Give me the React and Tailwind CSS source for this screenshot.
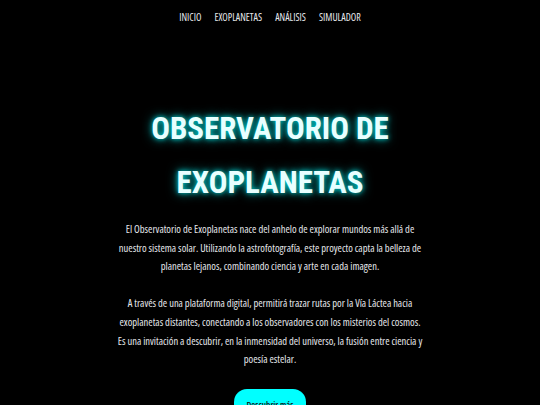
import React from 'react';

const navItems = ['INICIO', 'EXOPLANETAS', 'ANÁLISIS', 'SIMULADOR'];

const App = () => {
  return (
    <div className="min-h-screen bg-black text-white font-['Open_Sans',sans-serif] [font-stretch:condensed]">
      {/* Top navigation */}
      <nav className="flex justify-center gap-[13px] pt-[11px] text-[10px] text-gray-200">
        {navItems.map((item) => (
          <a key={item} href="#" className="leading-[12px]">
            {item}
          </a>
        ))}
      </nav>

      {/* Hero */}
      <section className="flex flex-col items-center text-center pt-[79px]">
        <h1 className="font-['Roboto_Condensed',sans-serif] text-[31px] font-bold leading-[54px] text-[#e8ffff] [text-shadow:0_0_5px_#00d0d0,0_0_11px_#009c9c]">
          OBSERVATORIO DE
          <br />
          EXOPLANETAS
        </h1>

        <div className="mt-[10px] w-[306px] text-[10.5px] leading-[18.6px] text-gray-200">
          <p>
            El Observatorio de Exoplanetas nace del anhelo de explorar mundos más allá de
            nuestro sistema solar. Utilizando la astrofotografía, este proyecto capta la belleza de
            planetas lejanos, combinando ciencia y arte en cada imagen.
          </p>
          <p className="mt-[18.6px]">
            A través de una plataforma digital, permitirá trazar rutas por la Vía Láctea hacia
            exoplanetas distantes, conectando a los observadores con los misterios del cosmos.
            Es una invitación a descubrir, en la inmensidad del universo, la fusión entre ciencia y
            poesía estelar.
          </p>
        </div>

        <button className="mt-[20px] w-[72px] rounded-[13px] bg-[#00ffff] pt-[11px] pb-[12px] text-[9px] font-semibold leading-[10px] text-[#111]">
          Descubrir más
        </button>
      </section>
    </div>
  );
};

export default App;
